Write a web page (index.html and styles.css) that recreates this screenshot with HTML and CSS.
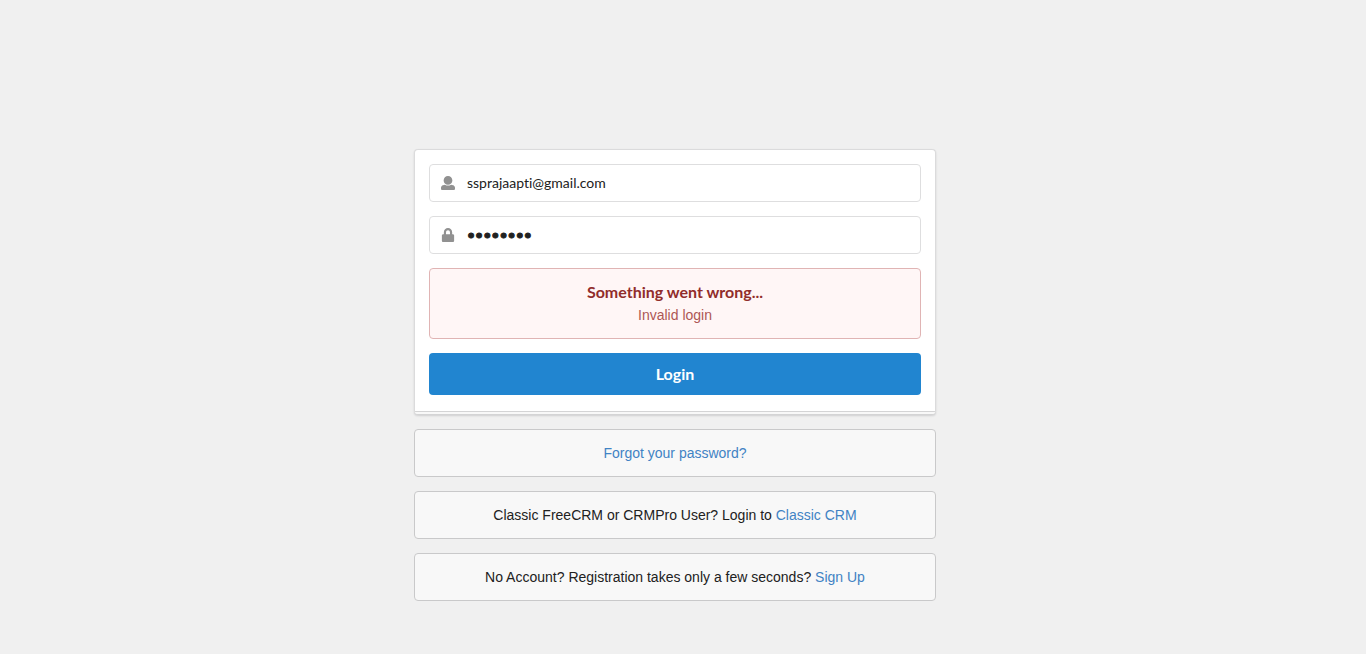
FILE: index.html
```html
<!DOCTYPE html>
<html lang="en">
<head>
<meta charset="utf-8">
<title>Login</title>
<link rel="stylesheet" href="styles.css">
</head>
<body>
<main class="page">
  <div class="column">
    <form class="card">
      <div class="fields">
        <label class="field">
          <svg class="icon" viewBox="0 0 512 512" role="img" aria-label="Email"><path d="M256 0c88.400 0 160 71.600 160 160s-71.600 160-160 160S96 248.400 96 160 167.600 0 256 0zm183.300 333.800l-71.300-17.800c-74.500 53.600-160.100 39.600-223.900 0l-71.400 17.800C29.900 344.500 0 382.800 0 426.900V464c0 26.500 21.500 48 48 48h416c26.500 0 48-21.500 48-48v-37.100c0-44.100-29.900-82.400-72.700-93.100z"/></svg>
          <input class="input" type="text" name="email" value="ssprajaapti@gmail.com">
        </label>
        <label class="field">
          <svg class="icon" viewBox="-32 0 512 512" role="img" aria-label="Password"><path d="M400 224h-24v-72C376 68.200 307.800 0 224 0S72 68.200 72 152v72H48c-26.500 0-48 21.500-48 48v192c0 26.500 21.500 48 48 48h352c26.500 0 48-21.500 48-48V272c0-26.500-21.500-48-48-48zm-104 0H152v-72c0-39.700 32.300-72 72-72s72 32.300 72 72v72z"/></svg>
          <input class="input input-password" type="password" name="password" value="abcdefgh">
        </label>
        <div class="error" role="alert">
          <h1 class="error-title">Something went wrong...</h1>
          <p class="error-text">Invalid login</p>
        </div>
        <button class="submit" type="button">Login</button>
      </div>
      <div class="stack-edge"></div>
    </form>
    <div class="note"><a class="link" href="#forgot">Forgot your password?</a></div>
    <div class="note">Classic FreeCRM or CRMPro User? Login to <a class="link" href="#classic">Classic CRM</a></div>
    <div class="note">No Account? Registration takes only a few seconds? <a class="link" href="#register">Sign Up</a></div>
  </div>
</main>
</body>
</html>
```
FILE: styles.css
```css
* {
  box-sizing: border-box;
}

body {
  margin: 0;
  background: #f0f0f0;
  color: #212121;
  font: 14px/20px "Liberation Sans", Arial, sans-serif;
}

.page {
  display: flex;
  justify-content: center;
  padding: 149px 16px 32px 0;
}

.column {
  display: flex;
  flex-direction: column;
  gap: 14px;
  width: 100%;
  max-width: 522px;
}

.card {
  border: 1px solid #dbdbdc;
  border-bottom-color: #d4d4d5;
  border-radius: 4px;
  background: #fff;
  box-shadow: 0 1px 2px rgba(34, 36, 38, 0.15);
  overflow: hidden;
}

.fields {
  display: flex;
  flex-direction: column;
  gap: 14px;
  padding: 14px 14px 16px;
}

.stack-edge {
  height: 3px;
  border-top: 1px solid #d4d4d5;
  background: #f8f8f8;
}

.field {
  display: flex;
  align-items: center;
  gap: 12px;
  height: 38px;
  padding: 0 11px;
  border: 1px solid #dededf;
  border-radius: 4px;
  background: #fff;
}

.icon {
  flex: none;
  width: 14px;
  height: 14px;
  fill: #919191;
}

.input {
  flex: 1;
  min-width: 0;
  height: 36px;
  padding: 0 0 2px;
  border: 0;
  outline: 0;
  background: transparent;
  color: #212121;
  font: 14px/17px Lato, sans-serif;
  font-variant-ligatures: none;
}

.input-password {
  -webkit-text-stroke: 1px #212121;
}

.error {
  padding: 14px 20px;
  border: 1px solid #e0b4b4;
  border-radius: 4px;
  background: #fff6f6;
  color: #9f3a38;
  text-align: center;
}

.error-title {
  margin: 0;
  color: #912d2b;
  font: bold 16px/18px Lato, sans-serif;
  font-variant-ligatures: none;
}

.error-text {
  margin: 5px 0 0;
  line-height: 18px;
  opacity: 0.85;
}

.submit {
  height: 42px;
  padding: 0 24px;
  border: 0;
  border-radius: 4px;
  background: #2185d0;
  color: #fff;
  font: bold 16px/20px Lato, sans-serif;
  cursor: pointer;
}

.note {
  padding: 13px;
  border: 1px solid #c9c9ca;
  border-radius: 4px;
  background: #f8f8f8;
  text-align: center;
}

.link {
  color: #4183c4;
  text-decoration: none;
}
```
